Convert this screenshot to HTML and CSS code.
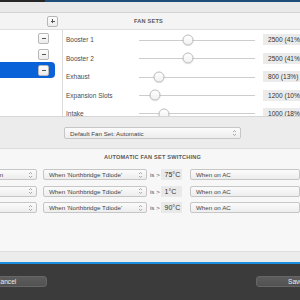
FILE: index.html
```html
<!DOCTYPE html>
<html lang="en">
<head>
    <meta charset="UTF-8">
    <title>Fan Sets</title>
    <link rel="stylesheet" href="styles.css">
</head>
<body>
    <div class="window">
        <!-- window chrome -->
        <div class="titlebar"><span class="tb-dark"></span><span class="tb-blue"></span></div>
        <div class="toolbar"></div>

        <div class="header">
            <div class="header-left"><button class="sq-btn plus"></button></div>
            <div class="header-title">FAN SETS</div>
        </div>

        <div class="content">
            <div class="list">
                <div class="list-row"><button class="sq-btn minus"></button></div>
                <div class="list-row"><button class="sq-btn minus"></button></div>
                <div class="list-row selected"><button class="sq-btn minus"></button></div>
            </div>
            <div class="fans">
                <div class="fan-row">
                    <span class="fan-label">Booster 1</span>
                    <div class="slider"><div class="knob-area"><span class="knob" style="left: 41%"></span></div></div>
                    <span class="fan-value">2500 (41%)</span>
                </div>
                <div class="fan-row">
                    <span class="fan-label">Booster 2</span>
                    <div class="slider"><div class="knob-area"><span class="knob" style="left: 41%"></span></div></div>
                    <span class="fan-value">2500 (41%)</span>
                </div>
                <div class="fan-row">
                    <span class="fan-label">Exhaust</span>
                    <div class="slider"><div class="knob-area"><span class="knob" style="left: 13%"></span></div></div>
                    <span class="fan-value">800 (13%)</span>
                </div>
                <div class="fan-row">
                    <span class="fan-label">Expansion Slots</span>
                    <div class="slider"><div class="knob-area"><span class="knob" style="left: 10%"></span></div></div>
                    <span class="fan-value">1200 (10%)</span>
                </div>
                <div class="fan-row">
                    <span class="fan-label">Intake</span>
                    <div class="slider"><div class="knob-area"><span class="knob" style="left: 18%"></span></div></div>
                    <span class="fan-value">1000 (18%)</span>
                </div>
            </div>
        </div>

        <div class="default-set">
            <div class="popup popup-default"><span>Default Fan Set: Automatic</span><svg class="updown" viewBox="0 0 5 8"><path d="M1 3 L2.5 1.5 L4 3 M1 5 L2.5 6.5 L4 5"/></svg></div>
        </div>

        <div class="switching">
            <div class="section-title">AUTOMATIC FAN SET SWITCHING</div>
            <div class="rules">
                <div class="rule">
                    <div class="popup popup-set"><span>Quiet Fan On</span><svg class="updown" viewBox="0 0 5 8"><path d="M1 3 L2.5 1.5 L4 3 M1 5 L2.5 6.5 L4 5"/></svg></div>
                    <div class="popup popup-sensor"><span>When 'Northbridge Tdiode'</span><svg class="updown" viewBox="0 0 5 8"><path d="M1 3 L2.5 1.5 L4 3 M1 5 L2.5 6.5 L4 5"/></svg></div>
                    <span class="op">is &gt;</span>
                    <span class="temp">75°C</span>
                    <div class="popup popup-power"><span>When on AC</span></div>
                </div>
                <div class="rule">
                    <div class="popup popup-set"><span>Boost</span><svg class="updown" viewBox="0 0 5 8"><path d="M1 3 L2.5 1.5 L4 3 M1 5 L2.5 6.5 L4 5"/></svg></div>
                    <div class="popup popup-sensor"><span>When 'Northbridge Tdiode'</span><svg class="updown" viewBox="0 0 5 8"><path d="M1 3 L2.5 1.5 L4 3 M1 5 L2.5 6.5 L4 5"/></svg></div>
                    <span class="op">is &gt;</span>
                    <span class="temp">1°C</span>
                    <div class="popup popup-power"><span>When on AC</span></div>
                </div>
                <div class="rule">
                    <div class="popup popup-set"><span>Full Speed</span><svg class="updown" viewBox="0 0 5 8"><path d="M1 3 L2.5 1.5 L4 3 M1 5 L2.5 6.5 L4 5"/></svg></div>
                    <div class="popup popup-sensor"><span>When 'Northbridge Tdiode'</span><svg class="updown" viewBox="0 0 5 8"><path d="M1 3 L2.5 1.5 L4 3 M1 5 L2.5 6.5 L4 5"/></svg></div>
                    <span class="op">is &gt;</span>
                    <span class="temp">90°C</span>
                    <div class="popup popup-power"><span>When on AC</span></div>
                </div>
            </div>
        </div>

        <div class="band"></div>

        <div class="footer">
            <button class="dark-btn cancel">Cancel</button>
            <button class="dark-btn save">Save</button>
        </div>
    </div>
</body>
</html>
```

FILE: styles.css
```css
html, body {
    margin: 0;
    padding: 0;
}
body {
    width: 300px;
    height: 300px;
    overflow: hidden;
    font-family: "Liberation Sans", Arial, sans-serif;
    color: #444;
}
.window {
    display: flex;
    flex-direction: column;
    width: 300px;
    height: 300px;
    background: #f7f7f7;
}

/* top chrome */
.titlebar {
    display: flex;
    height: 2px;
}
.tb-dark {
    width: 45px;
    background: #262626;
}
.tb-blue {
    flex: 1;
    background: #1d4c78;
}
.toolbar {
    height: 10px;
    background: #e9e9e9;
    border-bottom: 1px solid #d3d3d3;
}
.header {
    display: flex;
    align-items: center;
    height: 16px;
    background: #f4f4f4;
    border-bottom: 1px solid #dedede;
}
.header-left {
    width: 62px;
    padding-left: 47px;
    box-sizing: border-box;
}
.header-title {
    padding-left: 72px;
    font-size: 5.6px;
    font-weight: bold;
    color: #5a5a5a;
    letter-spacing: 0.2px;
}

/* small square +/- buttons */
.sq-btn {
    position: relative;
    display: block;
    width: 11px;
    height: 11px;
    padding: 0;
    border: 1px solid #b7b7b7;
    border-radius: 2px;
    background: linear-gradient(#fdfdfd, #ececec);
}
.sq-btn::before,
.plus::after {
    content: "";
    position: absolute;
    left: 2.5px;
    top: 4px;
    width: 4px;
    height: 1px;
    background: #555;
}
.plus::after {
    left: 4px;
    top: 2.5px;
    width: 1px;
    height: 4px;
}

/* fan sets content */
.content {
    display: flex;
    height: 86px;
    background: #fff;
    border-bottom: 1px solid #d6d6d6;
    overflow: hidden;
}
.list {
    width: 62px;
    flex-shrink: 0;
    border-right: 1px solid #dcdcdc;
}
.list-row {
    display: flex;
    align-items: center;
    height: 16px;
    width: 55px;
    padding-left: 38px;
    box-sizing: border-box;
}
.list-row.selected {
    background: #0a62d9;
    border-radius: 0 4px 4px 0;
}
.fans {
    flex: 1;
    padding-left: 3px;
    padding-top: 0.5px;
}
.fan-row {
    display: flex;
    align-items: center;
    height: 18.5px;
}
.fan-label {
    width: 73px;
    font-size: 6.5px;
    color: #4a4a4a;
}
.slider {
    position: relative;
    width: 116px;
    height: 12px;
    background: linear-gradient(transparent 5.5px, #cdcdcd 5.5px, #cdcdcd 6.5px, transparent 6.5px);
}
.knob-area {
    position: absolute;
    top: 0;
    bottom: 0;
    left: 6px;
    right: 6px;
}
.knob {
    position: absolute;
    top: 50%;
    width: 11px;
    height: 11px;
    border: 1px solid #bdbdbd;
    border-radius: 50%;
    box-sizing: border-box;
    background: linear-gradient(#ffffff, #f1f1f1);
    box-shadow: 0 0.5px 1px rgba(0, 0, 0, 0.15);
    transform: translate(-50%, -50%);
}
.fan-value {
    margin-left: 8px;
    width: 50px;
    height: 11px;
    line-height: 11px;
    padding-left: 5px;
    font-size: 6.6px;
    color: #333;
    background: #ebebeb;
    flex-shrink: 0;
}

/* default fan set */
.default-set {
    height: 32px;
    padding: 10px 0 0 64px;
    box-sizing: border-box;
    background: #ececec;
    border-bottom: 1px solid #dcdcdc;
}
.popup {
    display: flex;
    align-items: center;
    justify-content: space-between;
    height: 11px;
    padding: 0 3px 0 5px;
    box-sizing: border-box;
    border: 1px solid #c6c6c6;
    border-radius: 2px;
    background: linear-gradient(#fbfbfb, #ededed);
    font-size: 6.2px;
    color: #444;
    white-space: nowrap;
    flex-shrink: 0;
}
.popup-default {
    width: 177px;
    height: 12px;
}
.updown {
    width: 5px;
    height: 8px;
    fill: none;
    stroke: #8a8a8a;
    stroke-width: 0.7;
}

/* automatic switching */
.switching {
    height: 102px;
    background: #f7f7f7;
    border-bottom: 1px solid #dedede;
}
.section-title {
    height: 20px;
    padding-top: 5px;
    box-sizing: border-box;
    line-height: 6px;
    text-align: center;
    padding-left: 5px;
    font-size: 5.6px;
    font-weight: bold;
    color: #5a5a5a;
    letter-spacing: 0.2px;
}
.rules {
    display: flex;
    flex-direction: column;
    gap: 5.5px;
}
.rule {
    display: flex;
    align-items: center;
    height: 11px;
}
.popup-set {
    width: 77px;
    margin-left: -40px;
}
.popup-sensor {
    width: 104px;
    margin-left: 6px;
}
.op {
    margin-left: 3px;
    width: 17px;
    font-size: 6.2px;
    color: #555;
}
.temp {
    width: 32px;
    height: 11px;
    line-height: 11px;
    padding-left: 4px;
    box-sizing: border-box;
    background: #e9e9e9;
    font-size: 7px;
    color: #333;
}
.popup-power {
    width: 110px;
    margin-left: 8px;
}

.band {
    height: 10px;
    background: #ececec;
    border-bottom: 2px solid #1a8ee0;
}

/* bottom bar */
.footer {
    flex: 1;
    display: flex;
    justify-content: space-between;
    align-items: flex-start;
    padding-top: 12px;
    background: #3b3b3b;
}
.dark-btn {
    height: 11px;
    padding: 0;
    border: 1px solid #666;
    border-radius: 3px;
    background: linear-gradient(#5c5c5c, #525252);
    color: #eee;
    font-family: "Liberation Sans", Arial, sans-serif;
    font-size: 6.6px;
    line-height: 9px;
}
.cancel {
    width: 82px;
    margin-left: -35px;
}
.save {
    width: 79px;
    margin-right: -35px;
}
```
